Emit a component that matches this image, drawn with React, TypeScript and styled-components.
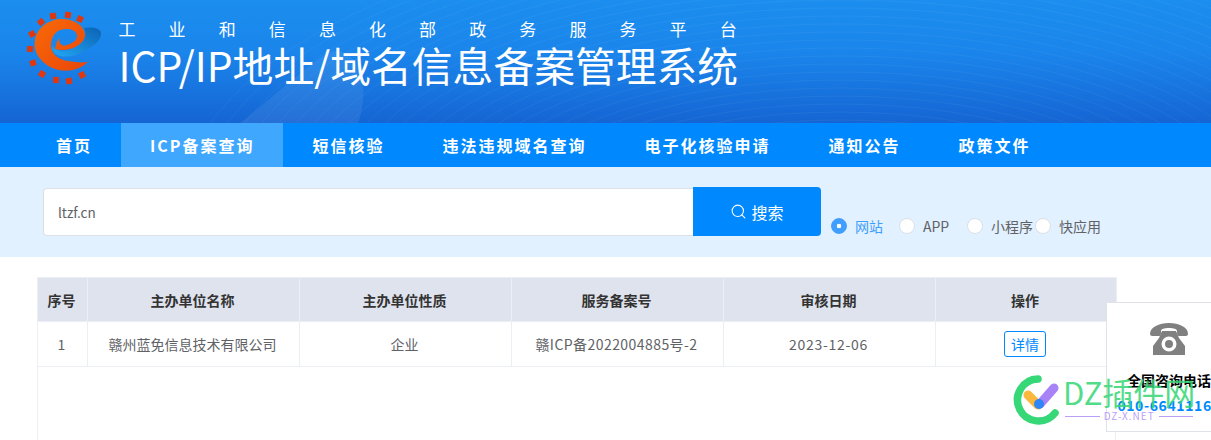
import { useState } from 'react'
import styled, { createGlobalStyle } from 'styled-components'
import { Search } from 'lucide-react'

const navItems = ['首页', 'ICP备案查询', '短信核验', '违法违规域名查询', '电子化核验申请', '通知公告', '政策文件']
const appTypes = ['网站', 'APP', '小程序', '快应用']
const columns = [
  { label: '序号', width: 50 },
  { label: '主办单位名称', width: 212 },
  { label: '主办单位性质', width: 212 },
  { label: '服务备案号', width: 212 },
  { label: '审核日期', width: 212 },
  { label: '操作', width: 181 },
]
const gearTeeth = [
  [32, 34, -30], [41, 22, -40], [53, 16, -10], [68, 15, 8], [80, 19, 25],
  [30, 49, 5], [33, 63, -20], [42, 74, 35], [56, 80, 8], [69, 81, -10], [82, 75, -25],
]

function Logo() {
  return (
    <LogoSvg viewBox="0 0 80 78" width="80" height="78">
      <defs>
        <linearGradient id="ring" x1="0" y1="0" x2="1" y2="1">
          <stop offset="0" stopColor="#f96a06" />
          <stop offset="1" stopColor="#e9460b" />
        </linearGradient>
        <linearGradient id="swoosh" x1="0" y1="1" x2="1" y2="0">
          <stop offset="0" stopColor="#23a8f4" />
          <stop offset="1" stopColor="#0b62b4" />
        </linearGradient>
      </defs>
      <g transform="translate(-25 -10)">
        {gearTeeth.map(([x, y, r]) => (
          <rect key={`${x}-${y}`} x={x - 3} y={y - 3} width="6" height="6" fill="#e0370f" transform={`rotate(${r} ${x} ${y})`} />
        ))}
        <path d="M88 62C78 72 62 73 50 67C38 60 33 50 35 40C37 27 50 19 62 19C74 19 85 26 85 35C85 45 68 53 55 49C56 44 57 41 59 38C59 44 62 47 67 45C73 43 78 40 77 35C75 29 68 28 60 30C53 33 51 40 51 47C52 55 60 60 68 61C75 62 82 63 88 62Z" fill="url(#ring)" />
        <path d="M52 45C50 55 64 60 78 54C92 48 102 40 101 33C100 27 90 27 84 28C88 36 84 44 72 49C64 52 56 52 52 45Z" fill="url(#swoosh)" />
      </g>
    </LogoSvg>
  )
}

function HeaderWaves() {
  return (
    <WavesSvg viewBox="0 0 1211 123" width="1211" height="123">
      <path d="M240 123C270 100 310 62 330 52C350 46 366 70 363 100C362 110 360 118 358 123Z" fill="#fff" opacity="0.07" />
      {Array.from({ length: 26 }, (_, i) => (
        <ellipse key={i} cx="840" cy="210" rx={260 + i * 16} ry={90 + i * 8} fill="none" stroke="#fff" strokeWidth="0.7" opacity="0.07" />
      ))}
    </WavesSvg>
  )
}

function PhoneIcon() {
  return (
    <svg viewBox="0 0 38 32" width="38" height="32">
      <path fill="#808080" d="M0 11C0 4 9 0 19 0C29 0 38 4 38 11C38 13 36 13 34 13H29C27 13 27 11 27 8C27 6 24 5 19 5C14 5 11 6 11 8C11 11 11 13 9 13H4C2 13 0 13 0 11Z" />
      <path fill="#808080" fillRule="evenodd" d="M12 8H26L29 15L35 23V32H3V23L9 15ZM19 13.500A7.500 7.500 0 1 0 19 28.500A7.500 7.500 0 1 0 19 13.500ZM19 17A4 4 0 1 1 19 25A4 4 0 1 1 19 17Z" />
    </svg>
  )
}

function WatermarkMark() {
  return (
    <svg viewBox="0 0 50 52" width="50" height="52">
      <path d="M28 5A21 21 0 1 0 45 39" fill="none" stroke="#35d776" strokeWidth="7.500" strokeLinecap="round" />
      <path d="M18 21L28 31" stroke="#fbb83d" strokeWidth="9" strokeLinecap="round" />
      <path d="M44 14L30 30" stroke="#a883f7" strokeWidth="9" strokeLinecap="round" />
      <circle cx="29" cy="30" r="5" fill="#2f86f6" />
    </svg>
  )
}

export default function App() {
  const [active, setActive] = useState(0)

  return (
    <Page>
      <GlobalStyle />
      <Header>
        <HeaderWaves />
        <Logo />
        <Titles>
          <Subtitle>工业和信息化部政务服务平台</Subtitle>
          <Title>ICP/IP地址/域名信息备案管理系统</Title>
        </Titles>
      </Header>

      <Nav>
        {navItems.map((item, i) => (
          <NavItem key={item} $active={i === 1}>{item}</NavItem>
        ))}
      </Nav>

      <SearchBand>
        <SearchInput readOnly value="ltzf.cn" />
        <SearchButton>
          <Search size={17} strokeWidth={1.5} />
          搜索
        </SearchButton>
        <RadioGroup>
          {appTypes.map((type, i) => (
            <RadioLabel key={type} $checked={i === active} onClick={() => setActive(i)}>
              <RadioDot $checked={i === active} />
              {type}
            </RadioLabel>
          ))}
        </RadioGroup>
      </SearchBand>

      <TableWrap>
        <Table>
          <colgroup>
            {columns.map(col => (
              <col key={col.label} width={col.width} />
            ))}
          </colgroup>
          <thead>
            <tr>
              {columns.map(col => (
                <HeadCell key={col.label}>{col.label}</HeadCell>
              ))}
            </tr>
          </thead>
          <tbody>
            <tr>
              <BodyCell>1</BodyCell>
              <BodyCell>赣州蓝免信息技术有限公司</BodyCell>
              <BodyCell>企业</BodyCell>
              <BodyCell $tracking={0.44}>赣ICP备2022004885号-2</BodyCell>
              <BodyCell $tracking={0.7}>2023-12-06</BodyCell>
              <BodyCell>
                <DetailButton>详情</DetailButton>
              </BodyCell>
            </tr>
          </tbody>
        </Table>
      </TableWrap>

      <ContactPanel>
        <PhoneIcon />
        <ContactLabel>全国咨询电话</ContactLabel>
        <ContactNumber>010-66411166</ContactNumber>
      </ContactPanel>

      <Watermark>
        <WatermarkMark />
        <WatermarkText>
          <WatermarkName>DZ插件网</WatermarkName>
          <WatermarkSite>DZ-X.NET</WatermarkSite>
        </WatermarkText>
      </Watermark>
    </Page>
  )
}

const GlobalStyle = createGlobalStyle`
  html, body {
    margin: 0;
    height: 100%;
    overflow: hidden;
    background: #fff;
    font-family: 'Noto Sans CJK SC', 'Noto Sans', sans-serif;
  }
`

const Page = styled.div`
  position: relative;
  width: 1211px;
  height: 440px;
  overflow: hidden;
`

const Header = styled.header`
  position: relative;
  display: flex;
  height: 123px;
  padding: 10px 0 0 25px;
  box-sizing: border-box;
  overflow: hidden;
  background: linear-gradient(180deg, #1b8eef 0%, #1a84ea 45%, #1565d3 100%);
`

const WavesSvg = styled.svg`
  position: absolute;
  top: 0;
  left: 0;
`

const LogoSvg = styled.svg`
  position: relative;
  flex: none;
`

const Titles = styled.div`
  position: relative;
  margin-left: 13.5px;
  color: #fff;
`

const Subtitle = styled.div`
  margin-top: 7px;
  font-size: 17px;
  line-height: 24px;
  letter-spacing: 33.1px;
  white-space: nowrap;
`

const Title = styled.h1`
  margin: -4px 0 0;
  font-size: 40.8px;
  font-weight: 400;
  line-height: 56px;
  white-space: nowrap;
`

const Nav = styled.nav`
  display: flex;
  height: 44px;
  padding-left: 27px;
  background: #0089ff;
`

const NavItem = styled.div<{ $active?: boolean }>`
  padding: 0 29px;
  font-size: 16px;
  font-weight: 700;
  line-height: 44px;
  letter-spacing: 2px;
  color: #fff;
  white-space: nowrap;
  background: ${p => (p.$active ? '#40a7ff' : 'transparent')};
`

const SearchBand = styled.section`
  display: flex;
  align-items: flex-end;
  height: 90px;
  padding: 20px 0 21px 43px;
  box-sizing: border-box;
  background: #e2f1ff;
`

const SearchInput = styled.input`
  width: 650px;
  height: 48px;
  padding: 0 14px;
  box-sizing: border-box;
  border: 1px solid #dcdfe6;
  border-right: none;
  border-radius: 4px 0 0 4px;
  outline: none;
  font-family: inherit;
  font-size: 13.5px;
  color: #606266;
  background: #fff;
`

const SearchButton = styled.button`
  display: flex;
  align-items: center;
  justify-content: center;
  gap: 4px;
  width: 128px;
  height: 49px;
  padding: 0;
  border: none;
  border-radius: 0 4px 4px 0;
  font-family: inherit;
  font-size: 16px;
  color: #fff;
  background: #0089ff;
`

const RadioGroup = styled.div`
  display: flex;
  margin-left: 10px;
`

const RadioLabel = styled.label<{ $checked: boolean }>`
  display: flex;
  align-items: center;
  gap: 8px;
  width: 68px;
  height: 20px;
  font-size: 14px;
  white-space: nowrap;
  color: ${p => (p.$checked ? '#409eff' : '#606266')};
`

const RadioDot = styled.span<{ $checked: boolean }>`
  flex: none;
  width: 14px;
  height: 14px;
  border: 1px solid ${p => (p.$checked ? '#409eff' : '#dcdfe6')};
  border-radius: 50%;
  background: ${p => (p.$checked ? 'radial-gradient(circle, #fff 2px, #409eff 2.6px)' : '#fff')};
`

const TableWrap = styled.div`
  width: 1079px;
  height: 200px;
  margin: 20px 0 0 37px;
  border: 1px solid #ebeef5;
  box-sizing: border-box;
`

const Table = styled.table`
  width: 1079px;
  margin: -1px 0 0 -1px;
  border-collapse: collapse;
  table-layout: fixed;
`

const HeadCell = styled.th`
  height: 43px;
  padding: 0 2px 0 0;
  border: 1px solid #ebeef5;
  font-size: 14px;
  font-weight: 700;
  color: #333;
  background: #dfe3ee;
`

const BodyCell = styled.td<{ $tracking?: number }>`
  height: 44px;
  padding: 0 2px 0 0;
  border: 1px solid #ebeef5;
  font-size: 14px;
  letter-spacing: ${p => p.$tracking ?? 0}px;
  text-align: center;
  color: #606266;
`

const DetailButton = styled.button`
  display: block;
  width: 42px;
  height: 26px;
  margin: 0 auto;
  padding: 0;
  border: 1px solid #0089ff;
  border-radius: 3px;
  font-family: inherit;
  font-size: 14px;
  line-height: 24px;
  color: #0089ff;
  background: #fff;
`

const ContactPanel = styled.aside`
  position: absolute;
  top: 302px;
  left: 1106px;
  display: flex;
  flex-direction: column;
  align-items: center;
  width: 126px;
  height: 130px;
  padding-top: 20px;
  box-sizing: border-box;
  border: 1px solid #dfe2ea;
  background: #fff;
`

const ContactLabel = styled.div`
  margin-top: 15px;
  font-size: 14px;
  font-weight: 700;
  line-height: 20px;
  white-space: nowrap;
  color: #000;
`

const ContactNumber = styled.div`
  margin-top: 5px;
  font-size: 14px;
  font-weight: 700;
  line-height: 20px;
  letter-spacing: 0.6px;
  white-space: nowrap;
  color: #0089ff;
`

const Watermark = styled.div`
  position: absolute;
  top: 374px;
  left: 1010px;
  display: flex;
  gap: 3px;
  pointer-events: none;
`

const WatermarkText = styled.div`
  display: flex;
  flex-direction: column;
  align-items: center;
`

const WatermarkName = styled.div`
  font-size: 31px;
  line-height: 36px;
  white-space: nowrap;
  color: #35d776;
  opacity: 0.85;
`

const WatermarkSite = styled.div`
  display: flex;
  align-items: center;
  gap: 4px;
  width: 128px;
  font-size: 10px;
  line-height: 12px;
  letter-spacing: 1px;
  color: #b99ff8;

  &::before,
  &::after {
    content: '';
    flex: 1;
    height: 1px;
    background: #b99ff8;
  }
`
